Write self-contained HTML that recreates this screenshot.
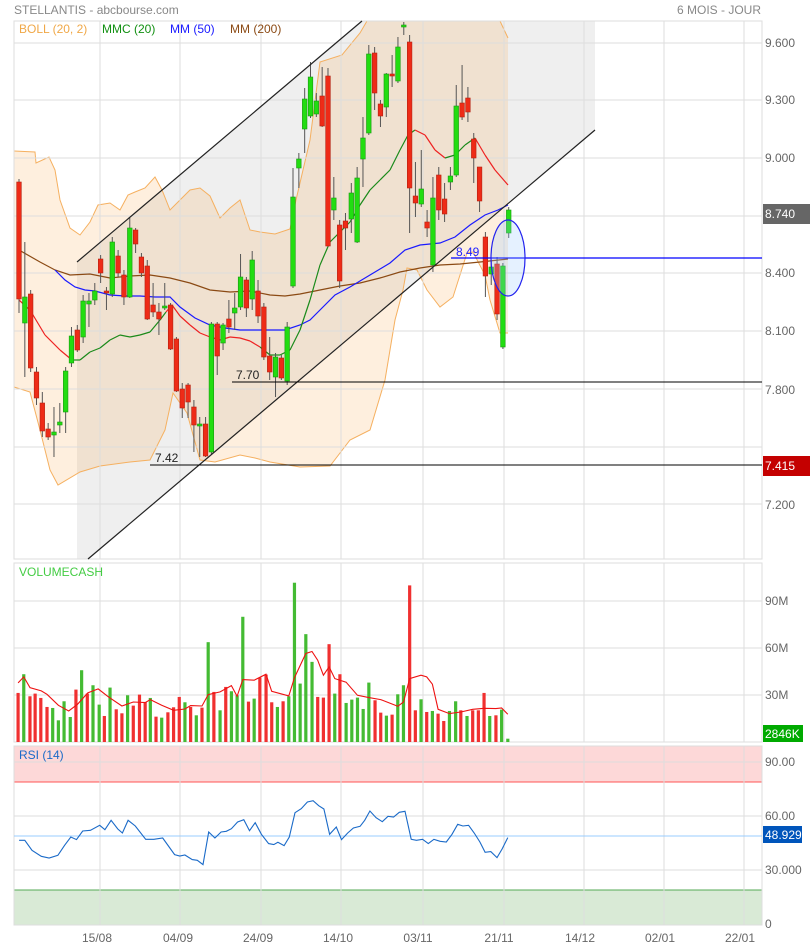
<!DOCTYPE html>
<html><head><meta charset="utf-8"><style>
html,body{margin:0;padding:0;background:#fff;}
svg{display:block;font-family:"Liberation Sans",sans-serif;}
</style></head><body>
<svg id="s" width="810" height="948" viewBox="0 0 810 948" xmlns="http://www.w3.org/2000/svg">
<rect width="810" height="948" fill="#fff"/>
<text x="14" y="14" font-size="12" fill="#888">STELLANTIS - abcbourse.com</text>
<text x="761" y="14" font-size="12" fill="#888" text-anchor="end">6 MOIS - JOUR</text>

<!-- channel grey region -->
<polygon points="77,262 362,21 595,21 595,130 88,559 77,559" fill="#efefef"/>
<!-- bollinger fill -->
<g id="boll"></g>
<g id="grid" stroke="#ddd" stroke-width="1" fill="none"></g>
<g id="lines"></g>
<g id="candles"></g>
<!-- channel lines -->
<line x1="77" y1="262" x2="362" y2="21" stroke="#222" stroke-width="1.2"/>
<line x1="88" y1="559" x2="595" y2="130" stroke="#222" stroke-width="1.2"/>
<!-- horizontal levels -->
<line x1="232" y1="382" x2="762" y2="382" stroke="#000" stroke-width="1"/>
<text x="236" y="379" font-size="12" fill="#222">7.70</text>
<line x1="150" y1="465" x2="762" y2="465" stroke="#000" stroke-width="1"/>
<text x="155" y="462" font-size="12" fill="#222">7.42</text>
<line x1="451" y1="258" x2="762" y2="258" stroke="#00f" stroke-width="1.2"/>
<text x="456" y="256" font-size="12" fill="#22f">8.49</text>
<ellipse cx="508" cy="258" rx="17" ry="38" fill="rgba(150,200,255,0.25)" stroke="#22e" stroke-width="1.2"/>

<!-- legend -->
<text x="19" y="33" font-size="12" fill="#f0a848">BOLL (20, 2)</text>
<text x="102" y="33" font-size="12" fill="#129012">MMC (20)</text>
<text x="170" y="33" font-size="12" fill="#1a1aff">MM (50)</text>
<text x="230" y="33" font-size="12" fill="#8b4a14">MM (200)</text>

<!-- price labels -->
<g font-size="12" fill="#666">
<text x="765" y="47">9.600</text>
<text x="765" y="104">9.300</text>
<text x="765" y="162">9.000</text>
<text x="765" y="277">8.400</text>
<text x="765" y="335">8.100</text>
<text x="765" y="394">7.800</text>
<text x="765" y="509">7.200</text>
</g>
<rect x="763" y="204" width="47" height="20" fill="#666"/>
<text x="765" y="218" font-size="12" fill="#fff">8.740</text>
<rect x="763" y="456" width="47" height="20" fill="#c40000"/>
<text x="765" y="470" font-size="12" fill="#fff">7.415</text>

<!-- volume panel -->
<text x="19" y="576" font-size="12" fill="#4c4">VOLUMECASH</text>
<g font-size="12" fill="#666">
<text x="765" y="605">90M</text>
<text x="765" y="652">60M</text>
<text x="765" y="699">30M</text>
</g>
<g id="vol"></g>
<rect x="763" y="725" width="40" height="17" fill="#0a0"/>
<text x="765" y="738" font-size="12" fill="#fff">2846K</text>

<!-- RSI panel -->
<rect x="14" y="746" width="748" height="36" fill="#fdd8d8"/>
<line x1="14" y1="782" x2="762" y2="782" stroke="#f55" stroke-width="1"/>
<rect x="14" y="890" width="748" height="35" fill="#d9ead6"/>
<line x1="14" y1="890" x2="762" y2="890" stroke="#5a5" stroke-width="1"/>
<g id="grid2" stroke="#ddd" stroke-width="1" fill="none"></g>
<line x1="14" y1="836" x2="762" y2="836" stroke="#9cf" stroke-width="1"/>
<text x="19" y="759" font-size="12" fill="#1a6ac8">RSI (14)</text>
<g id="rsi"></g>
<g font-size="12" fill="#666">
<text x="765" y="766">90.00</text>
<text x="765" y="820">60.00</text>
<text x="765" y="874">30.000</text>
<text x="765" y="928">0</text>
</g>
<rect x="763" y="826" width="39" height="17" fill="#0055bb"/>
<text x="765" y="839" font-size="12" fill="#fff">48.929</text>

<!-- dates -->
<g font-size="12" fill="#666" text-anchor="middle">
<text x="97" y="942">15/08</text>
<text x="178" y="942">04/09</text>
<text x="258" y="942">24/09</text>
<text x="338" y="942">14/10</text>
<text x="418" y="942">03/11</text>
<text x="499" y="942">21/11</text>
<text x="580" y="942">14/12</text>
<text x="660" y="942">02/01</text>
<text x="740" y="942">22/01</text>
</g>
</svg>
<script>
var NS="http://www.w3.org/2000/svg";
function el(p,t,a){var e=document.createElementNS(NS,t);for(var k in a)e.setAttribute(k,a[k]);document.getElementById(p).appendChild(e);return e;}
function pts(a){return a.map(function(p){return p[0]+","+p[1];}).join(" ");}
// grid
var vx=[100,180,261,341,423,504,584,664,744];
[[21,559],[563,742]].forEach(function(r){
 el("grid","rect",{x:14,y:r[0],width:748,height:r[1]-r[0]});
 vx.forEach(function(x){el("grid","line",{x1:x,y1:r[0],x2:x,y2:r[1]});});
});
[43,100,158,216,273,331,389,447,504].forEach(function(y){el("grid","line",{x1:14,y1:y,x2:762,y2:y});});
[601,648,695].forEach(function(y){el("grid","line",{x1:14,y1:y,x2:762,y2:y});});
el("grid2","rect",{x:14,y:746,width:748,height:179});
vx.forEach(function(x){el("grid2","line",{x1:x,y1:746,x2:x,y2:925});});
[762,816,870].forEach(function(y){el("grid2","line",{x1:14,y1:y,x2:762,y2:y});});
// bollinger
var up=[[14,151],[35,152],[36,163],[49,157],[55,170],[60,200],[70,228],[80,235],[90,222],[98,205],[110,203],[120,210],[128,195],[135,192],[145,188],[155,177],[162,190],[170,210],[180,200],[190,190],[200,188],[210,196],[220,218],[230,208],[240,200],[245,215],[250,230],[260,232],[275,234],[290,229],[296,200],[303,170],[310,140],[320,62],[342,55],[360,33],[367,21],[500,21],[508,38]];
var lo=[[508,333],[500,333],[490,300],[485,275],[473,252],[467,253],[453,297],[440,307],[427,290],[417,270],[407,268],[403,290],[395,320],[385,380],[370,430],[350,440],[330,466],[300,467],[270,462],[255,458],[240,455],[215,462],[200,460],[187,413],[173,393],[165,430],[150,460],[130,462],[100,466],[80,472],[58,485],[50,470],[40,430],[30,392],[14,387]];
el("boll","polygon",{points:pts(up.concat(lo)),fill:"#f7a03a","fill-opacity":"0.17"});
el("boll","polyline",{points:pts(up),fill:"none",stroke:"#f5b060","stroke-width":1});
el("boll","polyline",{points:pts(lo),fill:"none",stroke:"#f5b060","stroke-width":1});
// MAs
var mm200=[[19,250],[40,262],[55,270],[70,275],[90,274],[110,278],[130,276],[150,275],[170,278],[190,283],[210,290],[230,292],[250,291],[270,295],[285,296],[300,294],[320,290],[340,286],[360,283],[380,278],[400,272],[420,268],[440,265],[460,264],[480,262],[508,259]];
var mm50=[[55,270],[65,280],[75,287],[85,290],[95,291],[110,295],[125,296],[140,296],[155,297],[170,297],[180,307],[195,318],[210,325],[225,328],[240,330],[260,330],[285,330],[300,325],[310,320],[320,310],[335,295],[350,287],[370,275],[390,263],[405,250],[420,245],[440,243],[455,237],[470,225],[485,215],[498,210],[508,205]];
var mmc=[[19,300],[30,310],[45,335],[60,350],[72,360],[80,360],[90,352],[100,348],[110,340],[120,335],[130,337],[140,335],[150,332],[160,320],[166,312],[172,305],[180,316],[190,325],[200,333],[210,337],[220,340],[230,337],[240,338],[250,341],[260,347],[270,355],[280,355],[290,350],[300,330],[310,300],[320,265],[330,242],[340,232],[350,222],[360,205],[370,190],[380,180],[390,170],[400,150],[408,135],[415,130],[425,135],[435,150],[445,158],[455,155],[465,145],[475,138],[485,155],[495,170],[508,185]];
el("lines","polyline",{points:pts(mm200),fill:"none",stroke:"#8b4a14","stroke-width":1.2});
el("lines","polyline",{points:pts(mm50),fill:"none",stroke:"#1a1aff","stroke-width":1.2});
for(var i=1;i<mmc.length;i++){var x=mmc[i][0];var red=(x<=75)||(x>166&&x<=262)||(x>415&&x<=445)||(x>475);
 el("lines","line",{x1:mmc[i-1][0],y1:mmc[i-1][1],x2:mmc[i][0],y2:mmc[i][1],stroke:red?"#ee2222":"#1a8a1a","stroke-width":1.2});}
// candles
var C="r 182 299 179 313|g 297 323 242 377|r 294 368 290 372|r 372 398 367 405|r 403 431 392 437|r 429 437 423 440|g 432 435 407 457|g 422 425 403 433|g 371 412 367 433|g 336 363 327 367|r 330 350 325 352|g 301 337 295 343|g 301 304 293 327|g 291 300 283 305|r 259 273 255 283|r 291 293 287 310|g 242 294 237 297|r 256 273 250 277|r 275 297 270 305|g 228 297 218 298|r 230 244 228 253|r 257 273 253 277|r 266 319 260 320|r 305 312 283 317|r 312 319 303 335|g 306 308 283 310|r 305 349 303 350|r 339 391 337 392|r 389 408 383 418|r 385 402 383 418|r 407 425 400 452|g 424 426 417 457|r 424 456 417 457|g 324 452 322 455|r 324 356 322 375|g 325 343 323 350|r 319 327 300 333|g 308 313 293 330|g 277 307 254 310|r 280 308 277 317|g 260 299 251 310|r 291 316 280 323|r 307 357 303 360|r 356 372 337 380|g 357 377 353 397|r 358 378 355 380|g 327 381 322 385|g 197 286 168 288|g 159 168 153 188|g 99 129 88 153|g 77 116 62 118|g 101 114 93 117|r 96 126 67 127|r 76 246 68 247|g 198 210 177 220|r 225 281 220 288|r 221 228 213 250|g 193 219 183 233|g 178 242 167 243|g 138 159 117 187|g 54 133 45 135|r 53 93 47 110|r 104 116 100 127|g 74 107 73 117|r 74 76 55 87|g 47 81 37 83|g 25 27 22 35|r 42 188 35 233|r 196 203 162 217|g 189 204 150 207|r 222 228 210 237|g 198 265 177 272|r 175 210 167 220|r 199 214 183 222|g 176 182 167 190|g 106 175 85 177|r 103 117 65 120|r 98 112 87 122|r 139 158 133 183|r 167 201 167 212|r 237 276 232 297|g 267 274 260 285|r 264 314 257 320|g 266 347 263 349|g 210 233 207 238".split("|");
C.forEach(function(s,i){var a=s.split(" ");var x=19+i*5.83;var t=+a[1],b=+a[2];if(b-t<2)b=t+2;
 el("candles","line",{x1:x,y1:a[3],x2:x,y2:a[4],stroke:"#555","stroke-width":1});
 el("candles","rect",{x:x-2.3,y:t,width:4.6,height:b-t,fill:a[0]=="g"?"#22dd11":"#ee2b17",stroke:a[0]=="g"?"#189a10":"#b52010","stroke-width":0.6});});
// volume
var V="35 r 398|46 g 342|58 r 408|68 r 400|79 r 413|91 r 440|102 g 443|113 g 480|124 g 423|136 g 470|147 r 388|158 g 330|169 r 400|180 g 375|192 g 433|202 r 467|213 g 382|225 r 447|236 r 459|247 g 405|258 r 436|270 r 403|281 r 425|291 g 413|302 r 469|313 g 472|325 r 456|336 r 441|347 r 410|358 g 426|369 r 440|380 g 465|391 r 442|403 g 246|414 r 395|426 g 450|437 r 380|448 g 393|459 g 405|470 g 170|481 r 424|492 g 415|503 r 352|515 r 343|526 r 426|537 g 440|548 r 423|559 g 408|570 g 68|581 g 370|592 g 222|604 g 305|615 r 410|626 r 412|637 r 252|648 g 400|658 r 342|670 g 428|681 g 418|692 g 412|703 g 446|714 g 367|726 r 420|737 r 457|748 g 466|759 r 463|770 g 402|781 g 375|793 r 76|804 r 450|815 g 417|826 r 455|837 g 452|848 r 460|859 r 482|870 g 452|882 g 423|892 r 450|904 g 467|915 r 450|926 r 450|937 r 398|948 g 467|960 r 465|971 g 448|983 g 535".split("|");
function zx(v){return v*0.5166;} function zy(v){return 560+v*0.334;}
V.forEach(function(s){var a=s.split(" ");var x=zx(+a[0]),y=zy(+a[2]);
 el("vol","rect",{x:x-1.6,y:y,width:3.2,height:742-y,fill:a[1]=="g"?"#44bb33":"#f03030"});});
var VM=[[35,368],[46,350],[58,382],[80,392],[91,402],[113,435],[133,452],[150,432],[170,398],[190,386],[210,410],[236,437],[258,425],[281,427],[291,418],[313,435],[336,450],[358,446],[369,436],[391,437],[403,403],[426,395],[448,376],[459,408],[470,358],[492,360],[515,342],[526,393],[559,407],[570,352],[592,280],[604,274],[615,300],[626,345],[637,320],[648,355],[670,366],[692,405],[714,412],[737,418],[770,438],[781,425],[793,355],[815,345],[826,350],[837,372],[848,447],[870,460],[892,455],[915,447],[937,444],[960,445],[971,443],[983,462]];
el("vol","polyline",{points:pts(VM.map(function(p){return[zx(p[0]).toFixed(1),zy(p[1]).toFixed(1)];})),fill:"none",stroke:"#ee1111","stroke-width":1.1});
var R=[[37,840],[48,840],[62,870],[80,888],[95,893],[112,885],[125,855],[137,830],[148,838],[160,812],[175,810],[193,795],[203,808],[215,780],[228,806],[237,818],[248,780],[262,797],[282,837],[298,837],[315,833],[338,883],[348,887],[358,884],[372,898],[382,900],[393,913],[404,815],[416,833],[428,815],[438,813],[448,805],[460,785],[472,778],[483,811],[494,787],[506,822],[520,850],[530,853],[538,846],[550,856],[560,830],[571,757],[583,745],[595,725],[606,721],[617,736],[627,746],[638,822],[651,800],[661,838],[673,818],[684,803],[697,798],[706,780],[716,752],[728,772],[740,784],[751,768],[762,770],[773,756],[784,753],[796,837],[806,840],[818,837],[829,850],[840,837],[852,843],[864,845],[875,822],[886,792],[896,797],[907,795],[918,818],[929,845],[939,876],[950,874],[962,892],[972,866],[983,832]];
el("rsi","polyline",{points:pts(R.map(function(p){return[zx(p[0]).toFixed(1),(816+(p[1]-767)*0.333).toFixed(1)];})),fill:"none",stroke:"#1a6ac8","stroke-width":1.1});
</script>
</body></html>
